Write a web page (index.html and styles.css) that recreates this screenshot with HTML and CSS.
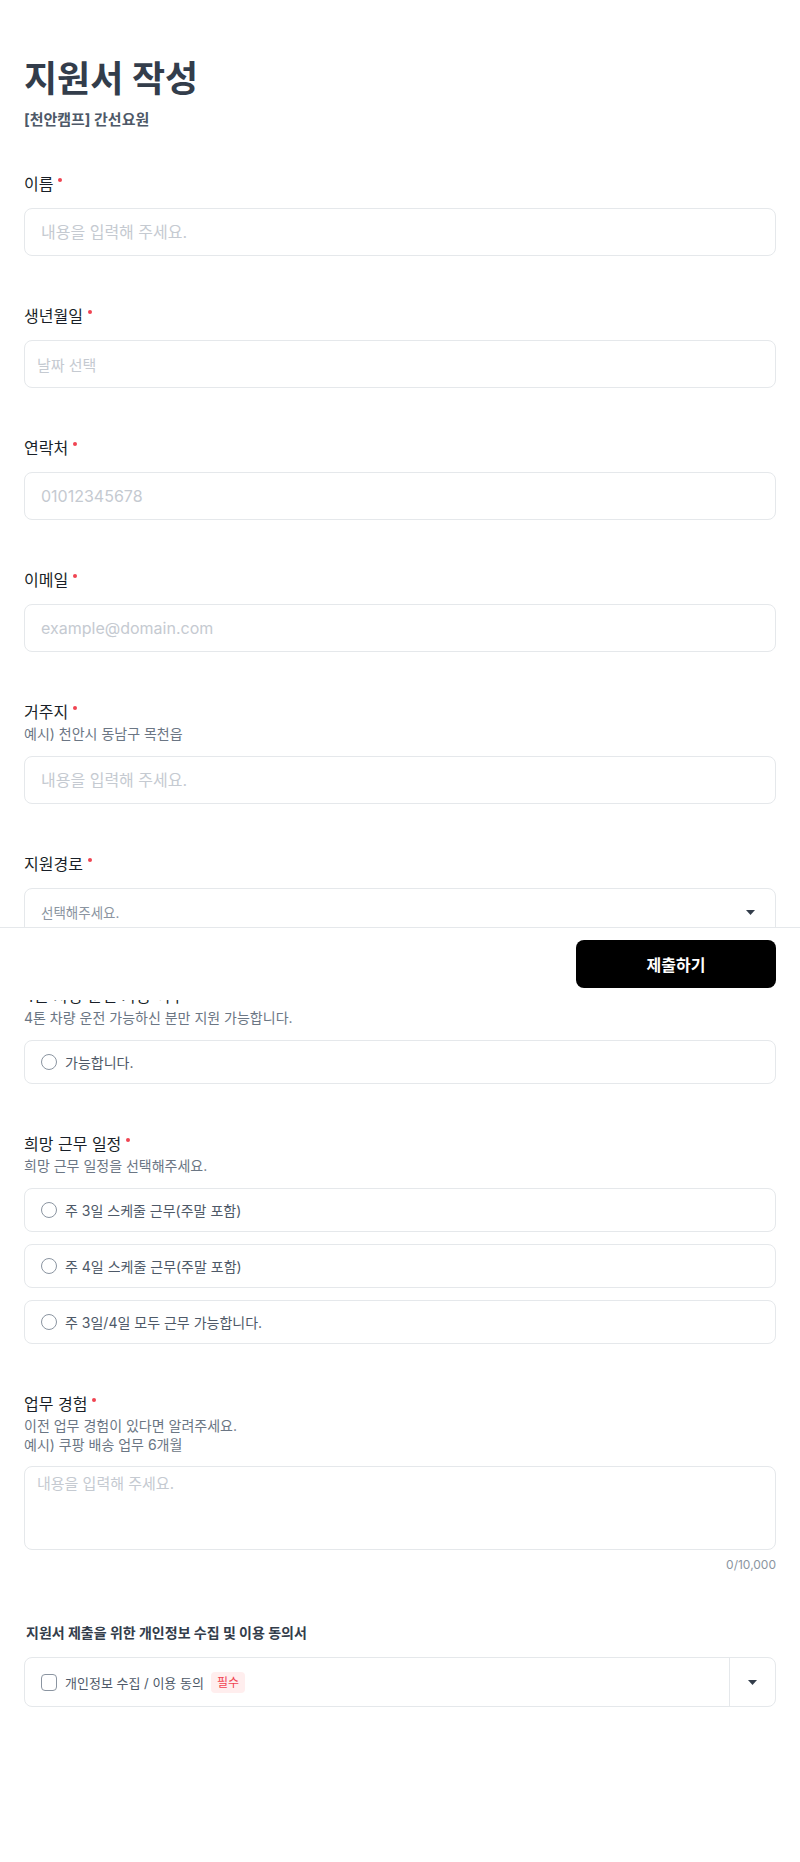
FILE: index.html
```html
<!DOCTYPE html>
<html lang="ko">
<head>
<meta charset="utf-8">
<title>지원서 작성</title>
<link rel="stylesheet" href="styles.css">
</head>
<body>
<main class="page">
  <header class="head">
    <h1 class="title">지원서 작성</h1>
    <p class="subtitle">[천안캠프] 간선요원</p>
  </header>

  <section class="field">
    <div class="label">이름<span class="req"></span></div>
    <input class="input" type="text" placeholder="내용을 입력해 주세요.">
  </section>

  <section class="field">
    <div class="label">생년월일<span class="req"></span></div>
    <div class="input date">날짜 선택</div>
  </section>

  <section class="field">
    <div class="label">연락처<span class="req"></span></div>
    <input class="input" type="text" placeholder="01012345678">
  </section>

  <section class="field">
    <div class="label">이메일<span class="req"></span></div>
    <input class="input" type="text" placeholder="example@domain.com">
  </section>

  <section class="field">
    <div class="label">거주지<span class="req"></span></div>
    <p class="hint">예시) 천안시 동남구 목천읍</p>
    <input class="input" type="text" placeholder="내용을 입력해 주세요.">
  </section>

  <section class="field">
    <div class="label">지원경로<span class="req"></span></div>
    <div class="input select">
      <span class="select-text">선택해주세요.</span>
      <svg class="caret" width="9" height="5" viewBox="0 0 9 5"><path d="M0 0H9L4.5 5Z"/></svg>
    </div>
  </section>

  <section class="field">
    <div class="label">4톤 차량 운전 가능 여부<span class="req"></span></div>
    <p class="hint">4톤 차량 운전 가능하신 분만 지원 가능합니다.</p>
    <div class="options">
      <label class="option"><span class="radio"></span>가능합니다.</label>
    </div>
  </section>

  <section class="field">
    <div class="label">희망 근무 일정<span class="req"></span></div>
    <p class="hint">희망 근무 일정을 선택해주세요.</p>
    <div class="options">
      <label class="option"><span class="radio"></span>주 3일 스케줄 근무(주말 포함)</label>
      <label class="option"><span class="radio"></span>주 4일 스케줄 근무(주말 포함)</label>
      <label class="option"><span class="radio"></span>주 3일/4일 모두 근무 가능합니다.</label>
    </div>
  </section>

  <section class="field">
    <div class="label">업무 경험<span class="req"></span></div>
    <p class="hint multi">이전 업무 경험이 있다면 알려주세요.<br>예시) 쿠팡 배송 업무 6개월</p>
    <textarea class="textarea" placeholder="내용을 입력해 주세요."></textarea>
    <div class="counter">0/10,000</div>
  </section>

  <section class="field">
    <h2 class="agree-title">지원서 제출을 위한 개인정보 수집 및 이용 동의서</h2>
    <div class="agree">
      <div class="agree-main">
        <span class="checkbox"></span>
        <span class="agree-text">개인정보 수집 / 이용 동의</span>
        <span class="badge">필수</span>
      </div>
      <div class="agree-toggle">
        <svg class="caret" width="9" height="5" viewBox="0 0 9 5"><path d="M0 0H9L4.5 5Z"/></svg>
      </div>
    </div>
  </section>
</main>

<div class="bottom-bar">
  <button class="submit" type="button">제출하기</button>
</div>
</body>
</html>
```

FILE: styles.css
```css
* {
  box-sizing: border-box;
}

html, body {
  margin: 0;
  padding: 0;
  background: #ffffff;
}

body {
  font-family: Inter, "Noto Sans CJK KR", sans-serif;
  color: #333d4b;
  position: relative;
  min-height: 1862px;
}

.page {
  padding: 56px 24px 0;
}

.head {
  margin-bottom: 41px;
}

.title {
  margin: 0;
  font-size: 36px;
  line-height: 46px;
  font-weight: 700;
  letter-spacing: 0;
  color: #333d4b;
}

.subtitle {
  margin: 7px 0 0;
  font-size: 15px;
  line-height: 22px;
  font-weight: 700;
  color: #4e5968;
}

.field + .field {
  margin-top: 48px;
}

.label {
  font-size: 16px;
  line-height: 24px;
  font-weight: 400;
  color: #191f28;
  margin-bottom: 12px;
}

.label:has(+ .hint) {
  margin-bottom: 0;
}

.req {
  display: inline-block;
  width: 4px;
  height: 4px;
  border-radius: 50%;
  background: #f04452;
  margin-left: 5px;
  vertical-align: 8px;
}

.hint {
  margin: 0 0 12px;
  font-size: 14px;
  line-height: 20px;
  letter-spacing: 0;
  color: #6b7684;
}

.hint.multi {
  line-height: 19px;
  margin-bottom: 12px;
}

.input {
  display: flex;
  align-items: center;
  width: 100%;
  height: 48px;
  padding: 0 16px;
  border: 1px solid #e5e8eb;
  border-radius: 8px;
  background: #fff;
  font-family: inherit;
  font-size: 16px;
  color: #333d4b;
  outline: none;
}

.input::placeholder {
  color: #c5cad1;
}

.date {
  padding-left: 12px;
  font-size: 15px;
  color: #c5cad1;
}

.select {
  justify-content: space-between;
  padding-right: 20px;
}

.select-text {
  font-size: 13.5px;
  color: #8b95a1;
}

.caret {
  display: block;
  fill: #333d4b;
}

.options {
  display: flex;
  flex-direction: column;
  gap: 12px;
}

.option {
  display: flex;
  align-items: center;
  gap: 8px;
  height: 44px;
  padding: 0 16px;
  border: 1px solid #e5e8eb;
  border-radius: 8px;
  font-size: 14px;
  font-weight: 400;
  color: #4e5968;
}

.radio {
  width: 16px;
  height: 16px;
  border: 1px solid #8b95a1;
  border-radius: 50%;
  flex: none;
}

.textarea {
  display: block;
  width: 100%;
  height: 84px;
  padding: 6px 12px;
  border: 1px solid #e5e8eb;
  border-radius: 8px;
  font-family: inherit;
  font-size: 15px;
  line-height: 22px;
  resize: none;
  outline: none;
}

.textarea::placeholder {
  color: #c5cad1;
}

.counter {
  margin-top: 5px;
  text-align: right;
  font-size: 12px;
  line-height: 20px;
  color: #8b95a1;
}

.agree-title {
  margin: 0 0 14px;
  padding-left: 2px;
  font-size: 14px;
  line-height: 20px;
  font-weight: 700;
  letter-spacing: 0;
  color: #333d4b;
}

.agree {
  display: flex;
  height: 50px;
  border: 1px solid #e5e8eb;
  border-radius: 8px;
}

.agree-main {
  flex: 1;
  display: flex;
  align-items: center;
  gap: 8px;
  padding: 0 16px;
}

.checkbox {
  width: 16px;
  height: 17px;
  border: 1px solid #8b95a1;
  border-radius: 4px;
  flex: none;
}

.agree-text {
  font-size: 13px;
  letter-spacing: 0;
  color: #4e5968;
}

.badge {
  margin-left: -1px;
  padding: 0 6px;
  height: 21px;
  line-height: 21px;
  border-radius: 4px;
  background: #ffeeee;
  color: #f04452;
  font-size: 12px;
}

.agree-toggle {
  width: 46px;
  display: flex;
  align-items: center;
  justify-content: center;
  border-left: 1px solid #e5e8eb;
}

.bottom-bar {
  position: absolute;
  top: 927px;
  left: 0;
  right: 0;
  height: 73px;
  padding: 12px 24px;
  display: flex;
  justify-content: flex-end;
  background: #ffffff;
  border-top: 1px solid #e5e8eb;
}

.submit {
  width: 200px;
  height: 48px;
  border: 0;
  border-radius: 8px;
  background: #000000;
  color: #ffffff;
  font-family: inherit;
  font-size: 16px;
  font-weight: 700;
  cursor: pointer;
}
```
